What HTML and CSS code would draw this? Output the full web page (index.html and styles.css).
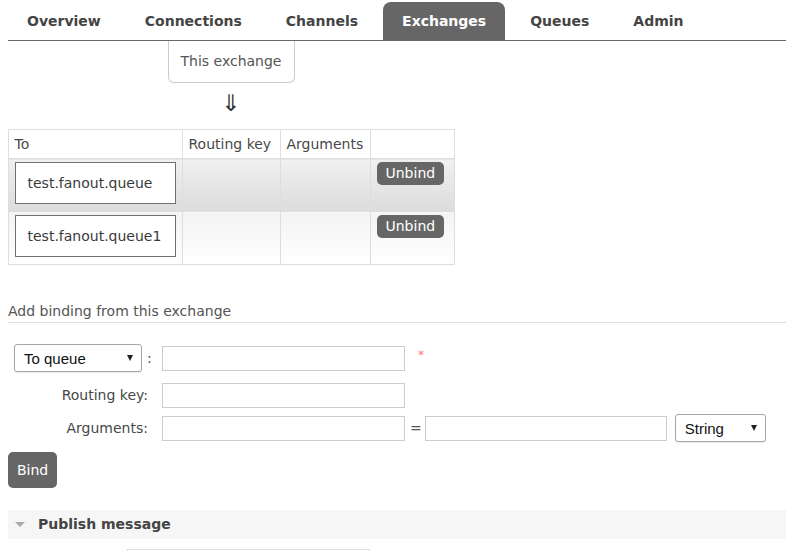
FILE: index.html
```html
<!DOCTYPE html>
<html lang="en">
<head>
<meta charset="utf-8">
<title>Exchange bindings</title>
<link rel="stylesheet" href="styles.css">
</head>
<body>
<div class="page">
  <ul class="tabs">
    <li>Overview</li>
    <li>Connections</li>
    <li>Channels</li>
    <li class="active">Exchanges</li>
    <li>Queues</li>
    <li>Admin</li>
  </ul>

  <div class="bindings">
    <div class="this-exchange">This exchange</div>
    <div class="arrow">&#8659;</div>
    <table class="list">
      <colgroup>
        <col class="c-to">
        <col class="c-key">
        <col class="c-args">
        <col class="c-act">
      </colgroup>
      <thead>
        <tr><th>To</th><th>Routing key</th><th>Arguments</th><th></th></tr>
      </thead>
      <tbody>
        <tr class="alt1">
          <td><span class="queue">test.fanout.queue</span></td>
          <td></td>
          <td></td>
          <td><button class="btn small" type="button">Unbind</button></td>
        </tr>
        <tr class="alt2">
          <td><span class="queue">test.fanout.queue1</span></td>
          <td></td>
          <td></td>
          <td><button class="btn small" type="button">Unbind</button></td>
        </tr>
      </tbody>
    </table>
  </div>

  <h3 class="section">Add binding from this exchange</h3>

  <form class="binding-form">
    <div class="row row-dest">
      <div class="label">
        <span class="select-wrap sel-dest">
          <select><option>To queue</option><option>To exchange</option></select>
          <span class="caret"></span>
        </span>
        <span class="colon">:</span>
      </div>
      <input class="text" type="text">
      <span class="mand">*</span>
    </div>
    <div class="row row-key">
      <div class="label">Routing key:</div>
      <input class="text" type="text">
    </div>
    <div class="row row-args">
      <div class="label">Arguments:</div>
      <input class="text" type="text">
      <span class="eq">=</span>
      <input class="text text-val" type="text">
      <span class="select-wrap sel-type">
        <select><option>String</option><option>Number</option><option>Boolean</option></select>
        <span class="caret"></span>
      </span>
    </div>
    <button class="btn bind" type="button">Bind</button>
  </form>

  <div class="section-toggle">
    <span class="tri"></span>
    <span class="toggle-title">Publish message</span>
  </div>
  <div class="publish-body">
    <input class="text" type="text">
  </div>
</div>
</body>
</html>
```

FILE: styles.css
```css
html {
  overflow: hidden;
}

body {
  margin: 0;
  font-family: "DejaVu Sans", Verdana, sans-serif;
  font-size: 14px;
  line-height: 17px;
  color: #484848;
  background: #fff;
}

.page {
  padding-left: 8px;
}

/* ---------- tabs ---------- */
.tabs {
  list-style: none;
  margin: 0;
  padding: 2px 0 0;
  display: flex;
  gap: 6px;
  border-bottom: 1px solid #666;
}

.tabs li {
  padding: 0 19px;
  line-height: 38px;
  font-weight: bold;
  color: #444;
  border-radius: 8px 8px 0 0;
}

.tabs li.active {
  background: #666;
  color: #fff;
}

/* ---------- bindings diagram ---------- */
.bindings {
  width: 446px;
  display: flex;
  flex-direction: column;
  align-items: center;
}

.this-exchange {
  border: 1px solid #ccc;
  border-top: none;
  border-radius: 0 0 6px 6px;
  padding: 0 12px;
  line-height: 41px;
  color: #555;
}

.arrow {
  margin-top: 8px;
  font-size: 23px;
  line-height: 24px;
  color: #333;
}

.list {
  margin-top: 14px;
  width: 446px;
  border-collapse: collapse;
  table-layout: fixed;
}

.c-to { width: 174px; }
.c-key { width: 98px; }
.c-args { width: 90px; }
.c-act { width: 84px; }

.list th {
  text-align: left;
  font-weight: normal;
  padding: 6px 6px 5px;
  border: 1px solid #ddd;
  color: #484848;
  white-space: nowrap;
}

.list td {
  padding: 3px 6px 7px;
  vertical-align: top;
  border: 1px solid #ddd;
}

.list tr.alt1 td {
  background: linear-gradient(#f0f0f0, #dcdcdc);
}

.list tr.alt2 td {
  background: linear-gradient(#f3f3f3, #fff);
}

.queue {
  display: block;
  border: 1px solid #707070;
  background: #fff;
  padding: 0 12px;
  line-height: 40px;
  color: #3a3a3a;
  white-space: nowrap;
}

/* ---------- buttons ---------- */
.btn {
  font-family: "DejaVu Sans", Verdana, sans-serif;
  font-size: 14px;
  line-height: 17px;
  background: #666;
  color: #fff;
  border: 0;
  border-radius: 5px;
  cursor: pointer;
}

.btn.small {
  padding: 3px 9px;
}

.btn.bind {
  display: block;
  margin-top: 10px;
  height: 36px;
  padding: 0 9px;
}

/* ---------- add binding ---------- */
.section {
  margin: 38px 0 0;
  padding: 0 0 2px;
  font-size: 14px;
  font-weight: normal;
  line-height: 17px;
  color: #555;
  border-bottom: 1px solid #ddd;
}

.binding-form {
  margin: 21px 0 0;
}

.row {
  display: flex;
  align-items: center;
}

.row-dest { height: 28px; }
.row-key { height: 25px; margin-top: 11px; }
.row-args { height: 28px; margin-top: 6px; }

.label {
  width: 146px;
  box-sizing: border-box;
  padding: 0 6px;
  display: flex;
  justify-content: flex-end;
  align-items: center;
  white-space: nowrap;
}

.row-dest .label {
  justify-content: flex-start;
}

.colon {
  margin-left: 5px;
}

.text {
  box-sizing: border-box;
  width: 243px;
  height: 25px;
  margin: 0 0 0 8px;
  padding: 2px 4px;
  border: 1px solid #ccc;
  background: #fff;
  font-family: "Liberation Sans", Arial, sans-serif;
  font-size: 14px;
}

.mand {
  align-self: flex-start;
  margin: 4px 0 0 13px;
  font-size: 12px;
  line-height: 14px;
  color: #f77;
}

.eq {
  margin-left: 5px;
  color: #555;
}

.text.text-val {
  width: 242px;
  margin-left: 3px;
}

.select-wrap {
  position: relative;
  display: inline-block;
}

.select-wrap select {
  appearance: none;
  -webkit-appearance: none;
  box-sizing: border-box;
  height: 28px;
  margin: 0;
  padding: 0 9px;
  border: 1px solid #a6a6a6;
  border-radius: 3px;
  background: #fff;
  font-family: "Liberation Sans", Arial, sans-serif;
  font-size: 15px;
  color: #111;
  box-shadow: 0 1px 1px rgba(0, 0, 0, 0.08);
}

.sel-dest select { width: 128px; }

.sel-type {
  margin-left: 8px;
}

.sel-type select { width: 91px; }

.caret {
  position: absolute;
  top: 11px;
  right: 9px;
  width: 0;
  height: 0;
  border-left: 3px solid transparent;
  border-right: 3px solid transparent;
  border-top: 6px solid #222;
  pointer-events: none;
}

/* ---------- publish message ---------- */
.section-toggle {
  margin-top: 22px;
  height: 29px;
  background: #f6f6f6;
  display: flex;
  align-items: center;
  padding-left: 7px;
}

.tri {
  width: 0;
  height: 0;
  border-left: 5px solid transparent;
  border-right: 5px solid transparent;
  border-top: 5px solid #aaa;
}

.toggle-title {
  margin-left: 13px;
  font-weight: bold;
  color: #444;
}

.publish-body {
  margin-top: 10px;
  padding-left: 111px;
}

.publish-body .text {
  border-color: #ddd;
}
```
